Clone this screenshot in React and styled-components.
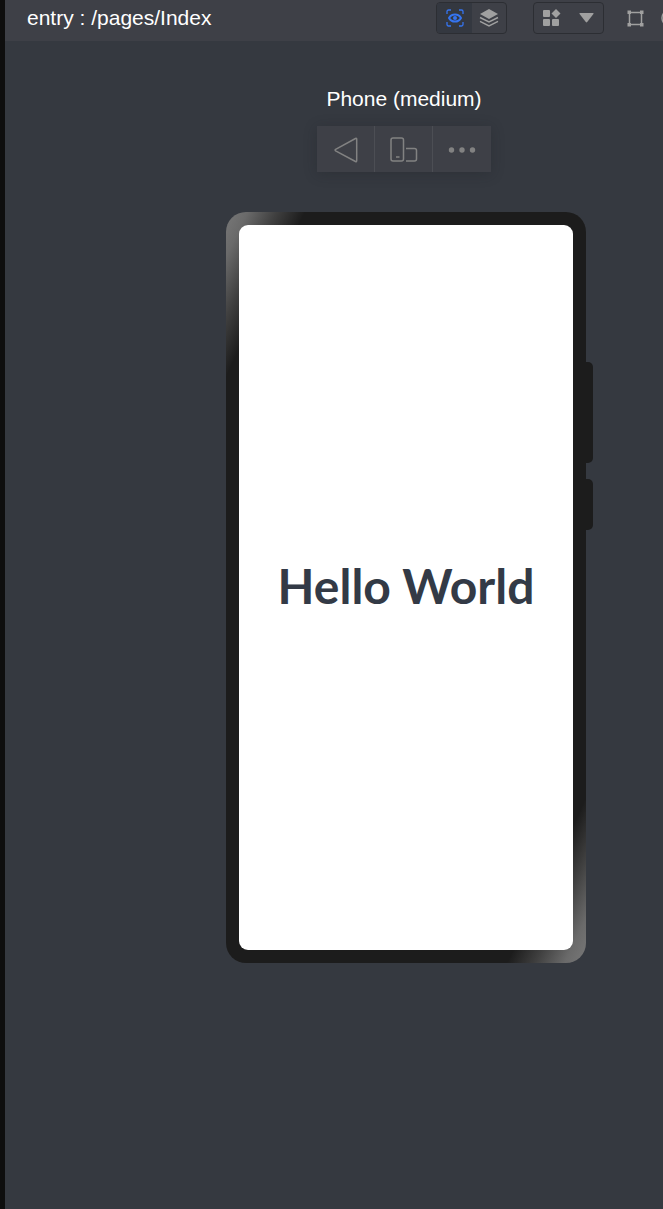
import React from "react";
import styled, { createGlobalStyle } from "styled-components";

const GlobalStyle = createGlobalStyle`
  * { box-sizing: border-box; }
  body {
    margin: 0;
    background: #353940;
    color: #fff;
    font-family: "Liberation Sans", Arial, sans-serif;
  }
`;

const Previewer = styled.div`
  min-height: 100vh;
  display: flex;
  flex-direction: column;
  border-left: 5px solid #0e0e0e;
  background: #353940;
  overflow: hidden;
`;

const TopBar = styled.header`
  display: flex;
  align-items: flex-start;
  justify-content: space-between;
  height: 41px;
  padding: 2px 0 0 22px;
  background: #3e4047;
`;

const PagePath = styled.h1`
  margin: 0;
  padding-top: 4px;
  font-size: 21px;
  line-height: 24px;
  font-weight: 400;
  white-space: nowrap;
`;

const Tools = styled.div`
  display: flex;
  align-items: flex-start;
  flex: none;
`;

const ToolGroup = styled.div`
  display: flex;
  height: 32px;
  margin-right: ${(p) => p.$gap}px;
  border: 1px solid #2c2e33;
  border-radius: 4px;
  overflow: hidden;
`;

const ToolButton = styled.button`
  display: flex;
  align-items: center;
  justify-content: ${(p) => p.$align || "center"};
  width: ${(p) => p.$width || 35}px;
  height: ${(p) => p.$height || 30}px;
  margin: 0 ${(p) => p.$gap || 0}px 0 0;
  padding: 0;
  border: 0;
  background: ${(p) => (p.$active ? "#343840" : "transparent")};
  color: ${(p) => (p.$active ? "#3574f0" : "#a0a0a0")};
  overflow: hidden;

  svg { flex: none; display: block; }
`;

const Stage = styled.main`
  display: flex;
  flex: 1;
  flex-direction: column;
  align-items: center;
  padding: 46px 0 40px 140px;
`;

const DeviceName = styled.h2`
  margin: 0 0 15px;
  font-size: 21px;
  line-height: 24px;
  font-weight: 400;
  white-space: nowrap;
`;

const DeviceActions = styled.div`
  display: grid;
  grid-template-columns: repeat(3, 58px);
  height: 46px;
  margin-bottom: 40px;
  background: #3e4047;
  box-shadow: 0 2px 12px rgba(30, 32, 38, 0.3);
`;

const ActionButton = styled.button`
  display: flex;
  align-items: center;
  justify-content: center;
  padding: 2px 0 0;
  border: 0;
  border-right: 1px solid #4c4e54;
  background: transparent;
  color: #828282;

  &:last-child { border-right: 0; }
  svg { display: block; }
`;

const Device = styled.div`
  position: relative;
  margin-left: 4px;
  padding: 13px;
  border-radius: 20px;
  background: linear-gradient(
    to bottom right,
    #787878 0%,
    #6a6a6a 3%,
    #404040 7%,
    #1c1c1c 11%,
    #1c1c1c 89%,
    #404040 93%,
    #6a6a6a 97%,
    #787878 100%
  );
`;

const SideKey = styled.span`
  position: absolute;
  left: 100%;
  top: ${(p) => p.$top}px;
  width: 7px;
  height: ${(p) => p.$length}px;
  border-radius: 0 5px 5px 0;
  background: #1c1c1c;
`;

const Screen = styled.section`
  display: flex;
  align-items: center;
  justify-content: center;
  width: 334px;
  height: 725px;
  padding-bottom: 4px;
  border-radius: 9px;
  background: #fff;
`;

const Greeting = styled.p`
  margin: 0;
  color: #333a46;
  font-family: Lato, sans-serif;
  font-size: 48px;
  line-height: 56px;
  font-weight: 700;
  white-space: nowrap;
`;

const InspectIcon = () => (
  <svg width="18" height="18" viewBox="0 0 18 18" fill="none" aria-hidden="true">
    <path d="M1 5V2.500A1.500 1.500 0 0 1 2.500 1H5M13 1h2.500A1.500 1.500 0 0 1 17 2.500V5M17 13v2.500a1.500 1.500 0 0 1-1.500 1.500H13M5 17H2.500A1.500 1.500 0 0 1 1 15.500V13" stroke="currentColor" strokeWidth="1.300" />
    <path d="M3 9C5.500 4.200 12.500 4.200 15 9 12.500 13.800 5.500 13.800 3 9Z" stroke="currentColor" strokeWidth="2" strokeLinejoin="round" />
    <circle cx="9" cy="9" r="2" fill="currentColor" />
  </svg>
);

const LayersIcon = () => (
  <svg width="20" height="18" viewBox="0 0 20 18" fill="none" aria-hidden="true">
    <path d="M10 0 19 5 10 10 1 5Z" fill="currentColor" />
    <path d="M1 8.500l9 4.500 9-4.500M1 12.300l9 4.500 9-4.500" stroke="currentColor" strokeWidth="1.500" />
  </svg>
);

const WidgetsIcon = () => (
  <svg width="18" height="18" viewBox="0 0 18 18" fill="currentColor" aria-hidden="true">
    <rect x="0" y="1" width="7" height="7" rx="1" />
    <rect x="0" y="10" width="7" height="7" rx="1" />
    <rect x="9" y="10" width="7" height="7" rx="1" />
    <path d="M13 0l4.500 4.500L13 9 8.500 4.500Z" />
  </svg>
);

const CaretIcon = () => (
  <svg width="15" height="10" viewBox="0 0 15 10" fill="currentColor" aria-hidden="true">
    <path d="M1 0h13q1 0 .4.900L8.200 9q-.7.800-1.400 0L.6.900Q0 0 1 0Z" />
  </svg>
);

const FrameIcon = () => (
  <svg width="17" height="17" viewBox="0 0 17 17" aria-hidden="true">
    <path d="M2.500 2.500h12v12h-12Z" fill="none" stroke="currentColor" strokeWidth="1.500" />
    <path d="M.5.500h3.500v3.500H.5ZM13 .5h3.500v3.500H13ZM.5 13h3.500v3.500H.5ZM13 13h3.500v3.500H13Z" fill="currentColor" />
  </svg>
);

const ZoomOutIcon = () => (
  <svg width="18" height="18" viewBox="0 0 18 18" fill="none" stroke="currentColor" strokeWidth="1.500" aria-hidden="true">
    <circle cx="9" cy="9" r="8" />
    <path d="M5 9h8" />
  </svg>
);

const BackIcon = () => (
  <svg width="24" height="26" viewBox="0 0 24 26" fill="none" stroke="currentColor" strokeWidth="1.500" strokeLinejoin="round" aria-hidden="true">
    <path d="M21.500 1.500q1.200-.5 1.200.7v21.600q0 1.200-1.200.7L1.600 13.800q-1-.8 0-1.500Z" />
  </svg>
);

const RotateIcon = () => (
  <svg width="28" height="26" viewBox="0 0 28 26" fill="none" stroke="currentColor" strokeWidth="1.500" aria-hidden="true">
    <rect x="1" y="1" width="12.500" height="23" rx="2" />
    <path d="M6 20h3.500M16 11.500h8.500a2 2 0 0 1 2 2v8.500a2 2 0 0 1-2 2H16" />
  </svg>
);

const MoreIcon = () => (
  <svg width="28" height="6" viewBox="0 0 28 6" fill="currentColor" aria-hidden="true">
    <circle cx="3.500" cy="3" r="2.700" />
    <circle cx="14" cy="3" r="2.700" />
    <circle cx="24.500" cy="3" r="2.700" />
  </svg>
);

export default function App() {
  return (
    <Previewer>
      <GlobalStyle />
      <TopBar>
        <PagePath>entry : /pages/Index</PagePath>
        <Tools>
          <ToolGroup $gap={26}>
            <ToolButton $active aria-label="Inspector"><InspectIcon /></ToolButton>
            <ToolButton $width={34} aria-label="Layers"><LayersIcon /></ToolButton>
          </ToolGroup>
          <ToolGroup $gap={14}>
            <ToolButton aria-label="Multi-profile preview"><WidgetsIcon /></ToolButton>
            <ToolButton $width={34} aria-label="Profile options"><CaretIcon /></ToolButton>
          </ToolGroup>
          <ToolButton $height={32} $gap={8} aria-label="Fit to frame"><FrameIcon /></ToolButton>
          <ToolButton $height={32} $width={2} $align="flex-start" aria-label="Zoom out"><ZoomOutIcon /></ToolButton>
        </Tools>
      </TopBar>
      <Stage>
        <DeviceName>Phone (medium)</DeviceName>
        <DeviceActions>
          <ActionButton aria-label="Back"><BackIcon /></ActionButton>
          <ActionButton aria-label="Rotate"><RotateIcon /></ActionButton>
          <ActionButton aria-label="More"><MoreIcon /></ActionButton>
        </DeviceActions>
        <Device>
          <SideKey $top={150} $length={101} />
          <SideKey $top={267} $length={51} />
          <Screen>
            <Greeting>Hello World</Greeting>
          </Screen>
        </Device>
      </Stage>
    </Previewer>
  );
}
